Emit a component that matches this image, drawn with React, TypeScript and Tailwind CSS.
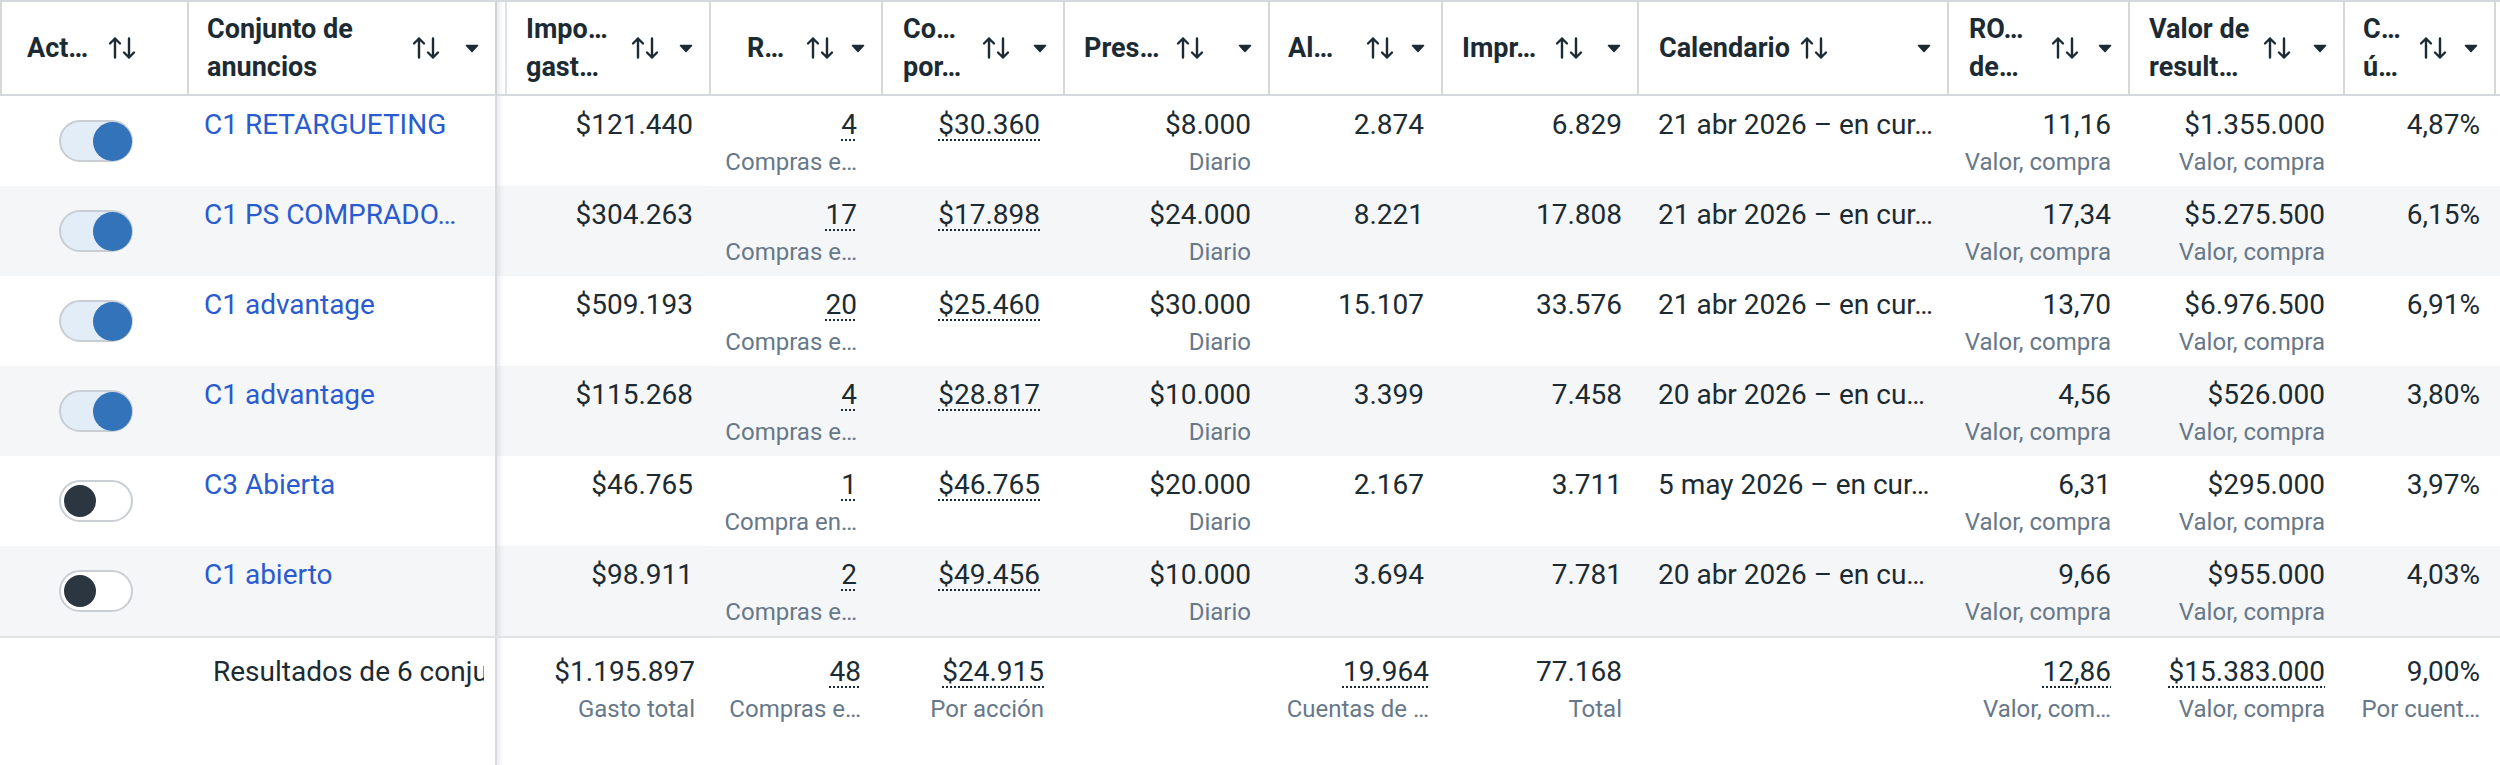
import React from "react";

const TEXT = "text-[#1c2b33]";

function SortIcon() {
  return (
    <svg width="30" height="24" viewBox="0 0 30 24" fill="none" stroke="#1c2b33" strokeWidth="2.4" strokeLinecap="round" strokeLinejoin="round" className="flex-none">
      <path d="M8 21.5V2.5M3 7.5l5-5 5 5" />
      <path d="M22 2.5v19M17 16.5l5 5 5-5" />
    </svg>
  );
}

function Caret() {
  return (
    <svg width="14" height="9" viewBox="0 0 14 9" className="flex-none">
      <path d="M1.5 1.5h11L7 7.5z" fill="#1c2b33" stroke="#1c2b33" strokeWidth="1.6" strokeLinejoin="round" />
    </svg>
  );
}

function Toggle({ on }: { on: boolean }) {
  if (on) {
    return (
      <div className="w-[74px] h-[42px] rounded-full border-2 border-[#c9ced4] bg-[#e3edf7] flex items-center justify-end">
        <div className="w-[39px] h-[39px] rounded-full bg-[#3373b9] -mr-[1px]" />
      </div>
    );
  }
  return (
    <div className="w-[74px] h-[42px] rounded-full border-2 border-[#c9ced4] bg-white flex items-center justify-start pl-[3px]">
      <div className="w-[32px] h-[32px] rounded-full bg-[#2c3640]" />
    </div>
  );
}

type HCol = { w: string; pl: string; tw: string; lines: string[]; caret: boolean; border: string };

const headers: HCol[] = [
  { w: "w-[189px]", pl: "pl-[25px]", tw: "w-[80px]", lines: ["Act…"], caret: false, border: "border-[#d5d8dc]" },
  { w: "w-[308px]", pl: "pl-[18px]", tw: "w-[204px]", lines: ["Conjunto de", "anuncios"], caret: true, border: "border-[#cfd2d6]" },
  { w: "w-[214px]", pl: "pl-[19px]", tw: "w-[104px]", lines: ["Impo…", "gast…"], caret: true, border: "border-[#d5d8dc]" },
  { w: "w-[172px]", pl: "pl-[36px]", tw: "w-[58px]", lines: ["R…"], caret: true, border: "border-[#d5d8dc]" },
  { w: "w-[182px]", pl: "pl-[20px]", tw: "w-[78px]", lines: ["Co…", "por…"], caret: true, border: "border-[#d5d8dc]" },
  { w: "w-[205px]", pl: "pl-[19px]", tw: "w-[91px]", lines: ["Pres…"], caret: true, border: "border-[#d5d8dc]" },
  { w: "w-[173px]", pl: "pl-[18px]", tw: "w-[77px]", lines: ["Al…"], caret: true, border: "border-[#d5d8dc]" },
  { w: "w-[196px]", pl: "pl-[19px]", tw: "w-[92px]", lines: ["Impr…"], caret: true, border: "border-[#d5d8dc]" },
  { w: "w-[310px]", pl: "pl-[20px]", tw: "w-[140px]", lines: ["Calendario"], caret: true, border: "border-[#d5d8dc]" },
  { w: "w-[181px]", pl: "pl-[20px]", tw: "w-[81px]", lines: ["RO…", "de…"], caret: true, border: "border-[#d5d8dc]" },
  { w: "w-[215px]", pl: "pl-[19px]", tw: "w-[113px]", lines: ["Valor de", "result…"], caret: true, border: "border-[#d5d8dc]" },
  { w: "w-[151px]", pl: "pl-[18px]", tw: "w-[55px]", lines: ["C…", "ú…"], caret: true, border: "border-[#d5d8dc]" },
];

function HeaderTitle({ c }: { c: HCol }) {
  return (
    <>
      <div className={`${c.tw} flex-none text-[27px] font-bold leading-[38px] whitespace-nowrap overflow-hidden`}>
        {c.lines.map((l, i) => (
          <div key={i}>{l}</div>
        ))}
      </div>
      <SortIcon />
      <div className="flex-1" />
      {c.caret ? <Caret /> : <div className="w-[14px] flex-none" />}
    </>
  );
}

function HeaderRow() {
  return (
    <div className="flex h-[96px] border-t-2 border-b-2 border-[#d5d8dc]">
      {headers.map((c, i) => {
        if (i === 2) {
          return (
            <div key={i} className={`${c.w} flex-none h-full flex border-r-2 ${c.border} pl-[8px] shadow-[inset_7px_0_6px_-5px_rgba(0,0,0,0.10)]`}>
              <div className={`flex-1 h-full flex items-center border-l-2 border-[#e0e2e5] ${c.pl} pr-[16px]`}>
                <HeaderTitle c={c} />
              </div>
            </div>
          );
        }
        return (
          <div
            key={i}
            className={`${c.w} flex-none h-full flex items-center border-r-2 ${c.border} ${c.pl} pr-[16px] ${i === 0 ? "border-l-2 border-l-[#d5d8dc]" : ""}`}
          >
            <HeaderTitle c={c} />
          </div>
        );
      })}
    </div>
  );
}

type Val = { v: string; s?: string; u?: boolean };

type Row = {
  on: boolean;
  name: string;
  imp: Val;
  r: Val;
  co: Val;
  pres: Val;
  al: Val;
  impr: Val;
  cal: string;
  ro: Val;
  valor: Val;
  c: Val;
};

const rows: Row[] = [
  { on: true, name: "C1 RETARGUETING", imp: { v: "$121.440" }, r: { v: "4", s: "Compras e…", u: true }, co: { v: "$30.360", u: true }, pres: { v: "$8.000", s: "Diario" }, al: { v: "2.874" }, impr: { v: "6.829" }, cal: "21 abr 2026 – en cur…", ro: { v: "11,16", s: "Valor, compra" }, valor: { v: "$1.355.000", s: "Valor, compra" }, c: { v: "4,87%" } },
  { on: true, name: "C1 PS COMPRADO…", imp: { v: "$304.263" }, r: { v: "17", s: "Compras e…", u: true }, co: { v: "$17.898", u: true }, pres: { v: "$24.000", s: "Diario" }, al: { v: "8.221" }, impr: { v: "17.808" }, cal: "21 abr 2026 – en cur…", ro: { v: "17,34", s: "Valor, compra" }, valor: { v: "$5.275.500", s: "Valor, compra" }, c: { v: "6,15%" } },
  { on: true, name: "C1 advantage", imp: { v: "$509.193" }, r: { v: "20", s: "Compras e…", u: true }, co: { v: "$25.460", u: true }, pres: { v: "$30.000", s: "Diario" }, al: { v: "15.107" }, impr: { v: "33.576" }, cal: "21 abr 2026 – en cur…", ro: { v: "13,70", s: "Valor, compra" }, valor: { v: "$6.976.500", s: "Valor, compra" }, c: { v: "6,91%" } },
  { on: true, name: "C1 advantage", imp: { v: "$115.268" }, r: { v: "4", s: "Compras e…", u: true }, co: { v: "$28.817", u: true }, pres: { v: "$10.000", s: "Diario" }, al: { v: "3.399" }, impr: { v: "7.458" }, cal: "20 abr 2026 – en cu…", ro: { v: "4,56", s: "Valor, compra" }, valor: { v: "$526.000", s: "Valor, compra" }, c: { v: "3,80%" } },
  { on: false, name: "C3 Abierta", imp: { v: "$46.765" }, r: { v: "1", s: "Compra en…", u: true }, co: { v: "$46.765", u: true }, pres: { v: "$20.000", s: "Diario" }, al: { v: "2.167" }, impr: { v: "3.711" }, cal: "5 may 2026 – en cur…", ro: { v: "6,31", s: "Valor, compra" }, valor: { v: "$295.000", s: "Valor, compra" }, c: { v: "3,97%" } },
  { on: false, name: "C1 abierto", imp: { v: "$98.911" }, r: { v: "2", s: "Compras e…", u: true }, co: { v: "$49.456", u: true }, pres: { v: "$10.000", s: "Diario" }, al: { v: "3.694" }, impr: { v: "7.781" }, cal: "20 abr 2026 – en cu…", ro: { v: "9,66", s: "Valor, compra" }, valor: { v: "$955.000", s: "Valor, compra" }, c: { v: "4,03%" } },
];

function Num({ val, w, pr, top, extra }: { val?: Val; w: string; pr: string; top: string; extra?: string }) {
  return (
    <div className={`${w} flex-none h-full flex flex-col items-end ${pr} ${top} ${extra ?? ""}`}>
      {val ? (
        <>
          <div
            className={`text-[28px] leading-[40px] whitespace-nowrap ${
              val.u ? "underline decoration-dotted decoration-[2px] underline-offset-[5px] decoration-[#1c2b33]" : ""
            }`}
          >
            {val.v}
          </div>
          {val.s ? (
            <div className="text-[24px] leading-[34px] text-[#67788a] whitespace-nowrap">{val.s}</div>
          ) : null}
        </>
      ) : null}
    </div>
  );
}

const FROZEN_SHADOW = "shadow-[inset_7px_0_6px_-5px_rgba(0,0,0,0.10)]";

function BodyRow({ r, idx }: { r: Row; idx: number }) {
  const bg = idx % 2 === 1 ? "bg-[#f5f6f7]" : "bg-white";
  const top = "pt-[9px]";
  return (
    <div className={`flex h-[90px] ${bg}`}>
      <div className="w-[189px] flex-none h-full flex items-center justify-center pl-[3px]">
        <Toggle on={r.on} />
      </div>
      <div className="w-[308px] flex-none h-full border-r-2 border-[#d8dbdf] pl-[15px] pr-[20px] pt-[9px]">
        <div className="text-[28px] leading-[40px] text-[#2a5bcf] whitespace-nowrap overflow-hidden">{r.name}</div>
      </div>
      <Num val={r.imp} w="w-[214px]" pr="pr-[18px]" top={top} extra={FROZEN_SHADOW} />
      <Num val={r.r} w="w-[172px]" pr="pr-[26px]" top={top} />
      <Num val={r.co} w="w-[182px]" pr="pr-[25px]" top={top} />
      <Num val={r.pres} w="w-[205px]" pr="pr-[19px]" top={top} />
      <Num val={r.al} w="w-[173px]" pr="pr-[19px]" top={top} />
      <Num val={r.impr} w="w-[196px]" pr="pr-[17px]" top={top} />
      <div className="w-[310px] flex-none h-full pl-[19px] pt-[9px]">
        <div className="text-[28px] leading-[40px] whitespace-nowrap">{r.cal}</div>
      </div>
      <Num val={r.ro} w="w-[181px]" pr="pr-[19px]" top={top} />
      <Num val={r.valor} w="w-[215px]" pr="pr-[20px]" top={top} />
      <Num val={r.c} w="w-[151px]" pr="pr-[16px]" top={top} />
    </div>
  );
}

function FooterRow() {
  const top = "pt-[14px]";
  return (
    <div className="flex flex-1 border-t-2 border-[#e0e2e5] bg-white">
      <div className="w-[189px] flex-none h-full" />
      <div className="w-[308px] flex-none h-full border-r-2 border-[#d8dbdf] pl-[24px] pt-[14px]">
        <div className="w-[271px] overflow-hidden text-[28px] leading-[40px] whitespace-nowrap">Resultados de 6 conjuntos de anuncios</div>
      </div>
      <Num val={{ v: "$1.195.897", s: "Gasto total" }} w="w-[214px]" pr="pr-[16px]" top={top} extra={FROZEN_SHADOW} />
      <Num val={{ v: "48", s: "Compras e…", u: true }} w="w-[172px]" pr="pr-[22px]" top={top} />
      <Num val={{ v: "$24.915", s: "Por acción", u: true }} w="w-[182px]" pr="pr-[21px]" top={top} />
      <Num w="w-[205px]" pr="pr-[19px]" top={top} />
      <Num val={{ v: "19.964", s: "Cuentas de …", u: true }} w="w-[173px]" pr="pr-[14px]" top={top} />
      <Num val={{ v: "77.168", s: "Total" }} w="w-[196px]" pr="pr-[17px]" top={top} />
      <div className="w-[310px] flex-none h-full" />
      <Num val={{ v: "12,86", s: "Valor, com…", u: true }} w="w-[181px]" pr="pr-[19px]" top={top} />
      <Num val={{ v: "$15.383.000", s: "Valor, compra", u: true }} w="w-[215px]" pr="pr-[20px]" top={top} />
      <Num val={{ v: "9,00%", s: "Por cuent…" }} w="w-[151px]" pr="pr-[16px]" top={top} />
    </div>
  );
}

export default function App() {
  return (
    <div className={`w-[2500px] h-[765px] overflow-hidden bg-white flex flex-col ${TEXT} [font-family:Roboto,'Liberation_Sans',sans-serif]`}>
      <HeaderRow />
      {rows.map((r, i) => (
        <BodyRow key={i} r={r} idx={i} />
      ))}
      <FooterRow />
    </div>
  );
}
